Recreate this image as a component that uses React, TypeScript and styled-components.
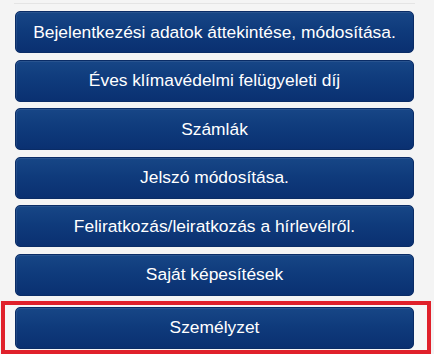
import styled, { createGlobalStyle } from 'styled-components';

const GlobalStyle = createGlobalStyle`
  html, body {
    margin: 0;
    padding: 0;
    background: #f4f4f4;
  }
  body {
    font-family: "Liberation Sans", Arial, sans-serif;
  }
`;

const Page = styled.div`
  width: 434px;
  height: 354px;
  overflow: hidden;
  box-sizing: border-box;
  padding-top: 3px;
`;

const TopRule = styled.div`
  margin: 0 19px 0 14px;
  height: 1px;
  background: #e4e4e4;
`;

const Menu = styled.div`
  display: flex;
  flex-direction: column;
  gap: 6.6px;
  padding-top: 7px;
`;

const Row = styled.div<{ highlighted?: boolean }>`
  box-sizing: border-box;
  margin: ${(p) => (p.highlighted ? '-2px 3px 0 1px' : '0')};
  padding: ${(p) => (p.highlighted ? '2px 13px 1px 10px' : '0 20px 0 15px')};
  border: ${(p) => (p.highlighted ? '4px solid #e0212b' : '0')};
  background: ${(p) => (p.highlighted ? '#f7f7f7' : 'transparent')};
`;

const MenuButton = styled.button`
  display: flex;
  align-items: center;
  justify-content: center;
  width: 100%;
  height: 42px;
  padding: 0 6px;
  border: 1px solid #0a2c66;
  border-radius: 5px;
  background: linear-gradient(to bottom, #174686 0%, #0f3b7c 45%, #0a3071 100%);
  box-shadow: inset 1px 1px 0 rgba(255, 255, 255, 0.08);
  color: #ffffff;
  font-family: "Liberation Sans", Arial, sans-serif;
  font-size: 17.4px;
  cursor: pointer;
  white-space: nowrap;
`;

const items = [
  'Bejelentkezési adatok áttekintése, módosítása.',
  'Éves klímavédelmi felügyeleti díj',
  'Számlák',
  'Jelszó módosítása.',
  'Feliratkozás/leiratkozás a hírlevélről.',
  'Saját képesítések',
  'Személyzet',
];

export default function App() {
  return (
    <>
      <GlobalStyle />
      <Page>
        <TopRule />
        <Menu>
          {items.map((label, i) => (
            <Row key={label} highlighted={i === items.length - 1}>
              <MenuButton>{label}</MenuButton>
            </Row>
          ))}
        </Menu>
      </Page>
    </>
  );
}
